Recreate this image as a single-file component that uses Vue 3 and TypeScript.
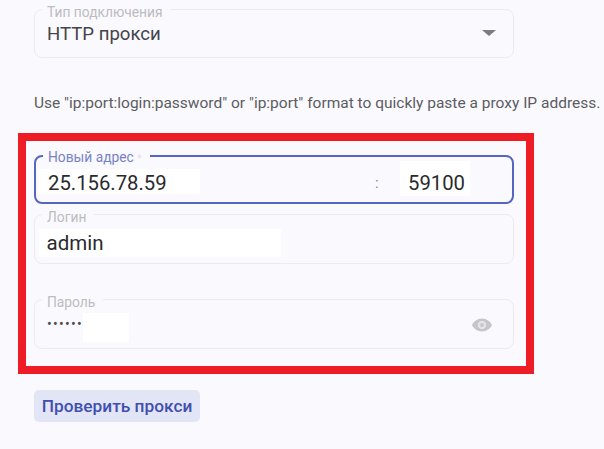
<script setup lang="ts">
const hint = 'Use "ip:port:login:password" or "ip:port" format to quickly paste a proxy IP address.'
</script>

<template>
  <main class="page">
    <fieldset class="field select">
      <legend>Тип подключения</legend>
      <div class="select-row">
        <span class="value">HTTP прокси</span>
        <svg class="caret" width="14" height="6" viewBox="0 0 14 6"><path d="M0 0h14L7 6z" fill="#7b7b80" /></svg>
      </div>
    </fieldset>
    <p class="hint">{{ hint }}</p>
    <section class="mark">
      <fieldset class="field focus">
        <legend>Новый адрес <span class="star">*</span></legend>
        <div class="address">
          <span class="patch ip">25.156.78.59</span>
          <span class="colon">:</span>
          <span class="patch port">59100</span>
        </div>
      </fieldset>
      <fieldset class="field login">
        <legend>Логин</legend>
        <span class="patch user">admin</span>
      </fieldset>
      <fieldset class="field password">
        <legend>Пароль</legend>
        <div class="pass-row">
          <span class="dots">••••••</span>
          <span class="patch blank"></span>
          <svg class="eye" width="22" height="16" viewBox="0 0 22 16">
            <path fill="#c6c6ca" fill-rule="evenodd" d="M11 1.500C6.200 1.500 2.500 4.500 1 8c1.500 3.500 5.200 6.500 10 6.500s8.500-3 10-6.500c-1.500-3.500-5.200-6.500-10-6.500zm0 2.700a3.800 3.800 0 1 1 0 7.600 3.800 3.800 0 0 1 0-7.600z" />
            <circle cx="11" cy="8" r="3.800" fill="#e4e4e8" />
            <circle cx="11" cy="8" r="1.900" fill="#c6c6ca" />
          </svg>
        </div>
      </fieldset>
    </section>
    <button class="check" type="button">Проверить прокси</button>
  </main>
</template>

<style scoped>
.page {
  box-sizing: border-box;
  width: 604px;
  height: 449px;
  overflow: hidden;
  padding: 0 0 0 34px;
  background: #faf9fd;
  font-family: Roboto, "Noto Sans", sans-serif;
  color: #2f2f33;
  display: flex;
  flex-direction: column;
  align-items: flex-start;
}
.field {
  box-sizing: border-box;
  width: 480px;
  height: 59px;
  margin: 0;
  padding: 0 12px;
  border: 1.500px solid #ececef;
  border-radius: 8px;
  flex: none;
}
legend {
  padding: 5px 8px 0 5px;
  margin-left: -5px;
  font-size: 13.800px;
  line-height: 14px;
  color: #bcbcc1;
}
.select {
  height: 58px;
}
.select-row {
  display: flex;
  align-items: center;
  justify-content: space-between;
  height: 24px;
  margin-top: 3px;
}
.value {
  font-size: 18.600px;
  line-height: 24px;
  color: #44444a;
}
.caret {
  margin: 0 5px 2px 0;
}
.hint {
  margin: 36px 0 0;
  white-space: nowrap;
  font-size: 15.500px;
  line-height: 18px;
  color: #5c5c62;
}
.mark {
  box-sizing: border-box;
  width: 516px;
  height: 241px;
  margin: 21px 0 0 -16px;
  padding: 4px 8px 0;
  border: 8px solid #ee1c25;
  display: flex;
  flex-direction: column;
  flex: none;
}
.focus {
  border: 2px solid #5566c0;
}
.focus legend {
  color: #7783c8;
}
.star {
  color: #e0e0e6;
  font-size: 10px;
}
.address {
  display: flex;
  align-items: flex-start;
  margin: 3px 0 0 -10px;
}
.patch {
  background: #fff;
  display: block;
  color: #2a2a2e;
  flex: none;
}
.ip {
  width: 152px;
  height: 25px;
  line-height: 28px;
  padding-left: 10px;
  font-size: 20.300px;
}
.colon {
  margin-left: 175px;
  width: 25px;
  line-height: 28px;
  color: #8c8c90;
  font-size: 15px;
}
.port {
  width: 62px;
  height: 35px;
  margin-top: -8px;
  line-height: 44px;
  padding-left: 8px;
  font-size: 20.300px;
}
.login {
  margin-top: 1px;
}
.user {
  width: 234px;
  height: 28px;
  line-height: 28px;
  margin: 5px 0 0 -8.500px;
  padding-left: 8px;
  font-size: 20.500px;
}
.password {
  margin-top: 26px;
}
.pass-row {
  display: flex;
  align-items: center;
  margin-top: 4px;
  height: 29px;
}
.dots {
  width: 36px;
  font-size: 14px;
  line-height: 18px;
  letter-spacing: 1.300px;
  color: #4c4c52;
  margin-bottom: 7px;
  flex: none;
  white-space: nowrap;
  overflow: hidden;
}
.blank {
  width: 46px;
  height: 29px;
}
.eye {
  margin: 0 8px 5px auto;
}
.check {
  margin-top: 16px;
  width: 166px;
  height: 32px;
  padding: 0;
  border: 0;
  border-radius: 5px;
  background: #e2e5f6;
  color: #3f4fb0;
  font-family: inherit;
  font-size: 17.300px;
  font-weight: 500;
}
</style>
